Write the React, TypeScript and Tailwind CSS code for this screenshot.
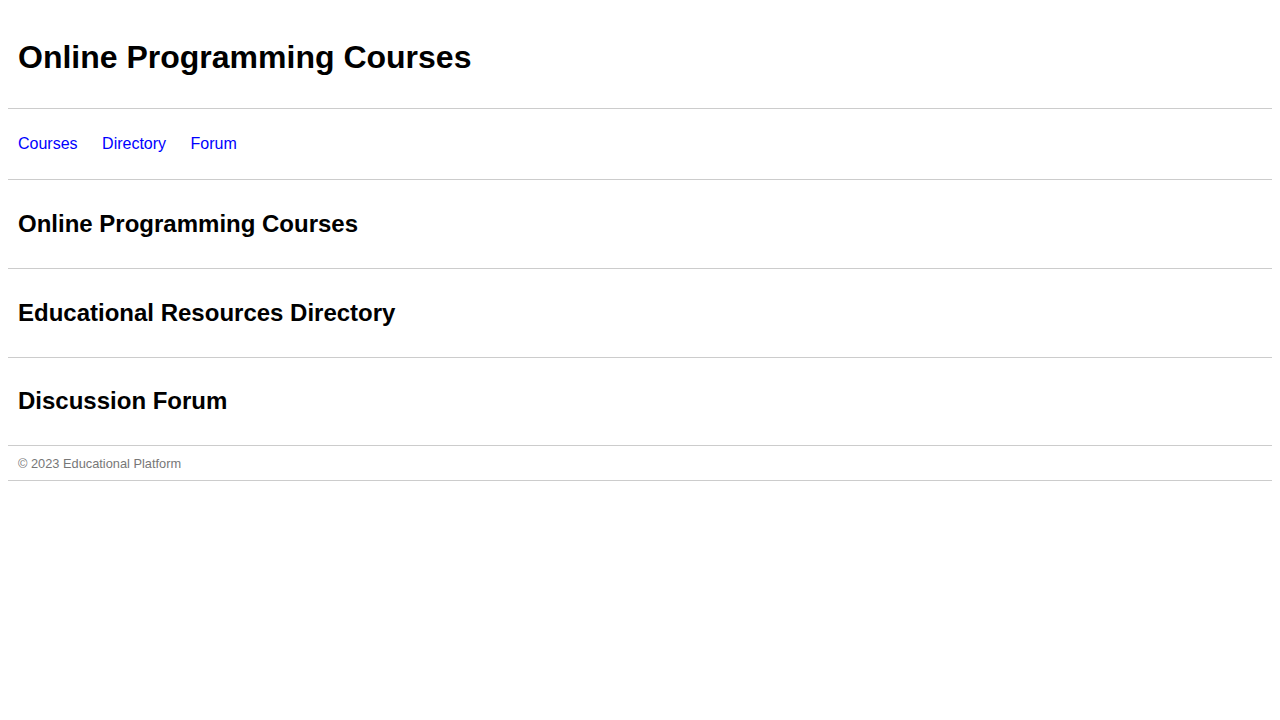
import React from 'react';

const sections = ['Online Programming Courses', 'Educational Resources Directory', 'Discussion Forum'];
const links = ['Courses', 'Directory', 'Forum'];

const App: React.FC = () => {
  return (
    <div className="m-2 bg-white font-['Liberation_Sans',Arial,sans-serif] text-black">
      {/* Header */}
      <header className="p-[10px] border-b border-[#ccc]">
        <h1 className="text-[32px] font-bold leading-[normal] my-[21.44px]">Online Programming Courses</h1>
      </header>

      {/* Nav */}
      <nav className="p-[10px] border-b border-[#ccc]">
        <ul className="my-4 flex gap-[24.5px]">
          {links.map((l) => (
            <li key={l} className="text-[16px] leading-[normal]">
              <a href="#" className="text-[#0000ff]">{l}</a>
            </li>
          ))}
        </ul>
      </nav>

      {/* Sections */}
      {sections.map((s) => (
        <section key={s} className="p-[10px] border-b border-[#ccc]">
          <h2 className="text-[24px] font-bold leading-[normal] my-[19.92px]">{s}</h2>
        </section>
      ))}

      {/* Footer */}
      <footer className="px-[10px] py-[9.5px] border-b border-[#ccc]">
        <p className="text-[12.8px] leading-[normal] text-[#777]">© 2023 Educational Platform</p>
      </footer>
    </div>
  );
};

export default App;
